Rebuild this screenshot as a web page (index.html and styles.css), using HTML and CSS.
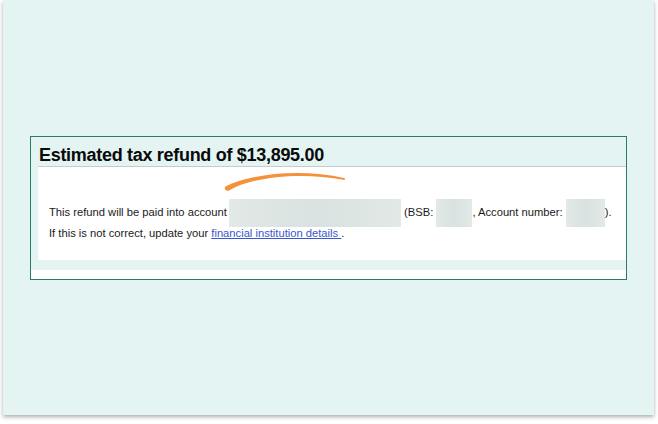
FILE: index.html
```html
<!DOCTYPE html>
<html>
<head>
<meta charset="utf-8">
<link rel="stylesheet" href="styles.css">
</head>
<body>
<div class="card">
  <div class="box">
    <div class="inner">
      <h1 class="title">Estimated tax refund of $13,895.00</h1>
      <div class="panel">
        <p class="line">This refund will be paid into account <span class="redact r1"></span> (BSB: <span class="redact r2"></span>, Account number: <span class="redact r3"></span>).</p>
        <p class="line">If this is not correct, update your <a class="link" href="#">financial institution details </a>.</p>
      </div>
    </div>
    <svg class="swoosh" width="130" height="28" viewBox="0 0 130 28">
      <path d="M5.5,20.5 C30,8 80,2 125,12.2 L124.6,14 C80,5.5 32,11 9,24.5 C6,26 3.5,22 5.5,20.5 Z" fill="#f5913a"/>
    </svg>
  </div>
</div>
</body>
</html>
```

FILE: styles.css
```css
html, body {
  margin: 0;
  padding: 0;
  background: #ffffff;
}
body {
  width: 658px;
  height: 424px;
  overflow: hidden;
  font-family: "Liberation Sans", Arial, sans-serif;
}
.card {
  margin-left: 3px;
  width: 651px;
  height: 415px;
  background: #e3f4f3;
  box-shadow: 0 2px 4px rgba(0, 0, 0, 0.32);
  padding: 136px 0 0 27px;
  box-sizing: border-box;
}
.box {
  position: relative;
  width: 597px;
  box-sizing: border-box;
  border: 1px solid #2c7a6f;
  background: #ffffff;
  padding-bottom: 9px;
}
.inner {
  background: #e3f4f3;
  padding: 0 0 10px 7px;
}
.title {
  margin: 0;
  padding: 7px 0 0 1px;
  font-size: 18px;
  line-height: 22px;
  font-weight: bold;
  letter-spacing: -0.3px;
  color: #0a0a0a;
  border-bottom: 1px solid #c6cccb;
}
.panel {
  background: #ffffff;
  padding: 35px 0 16px 11px;
}
.line {
  margin: 0;
  font-size: 11.2px;
  line-height: 21px;
  color: #1a1a1a;
  white-space: nowrap;
}
.redact {
  display: inline-block;
  height: 28px;
  margin: -4px 0;
  vertical-align: middle;
  background: linear-gradient(90deg, #e2e9e7, #d9e2e0 50%, #e2e9e7);
}
.r1 { width: 172px; margin-left: -1px; }
.r2 { width: 36px; }
.r3 { width: 39px; }
.link {
  color: #3a56cc;
  text-decoration: underline;
}
.swoosh {
  position: absolute;
  left: 189px;
  top: 29px;
}
```
